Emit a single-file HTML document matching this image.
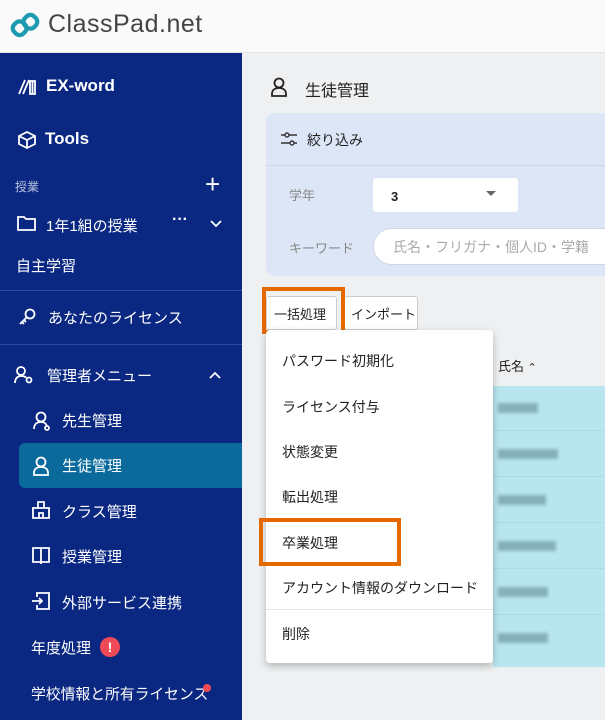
<!DOCTYPE html>
<html><head><meta charset="utf-8"><style>
*{box-sizing:border-box;margin:0;padding:0}
body{width:605px;height:720px;overflow:hidden;background:#eef0f2;font-family:"Liberation Sans","Noto Sans CJK JP",sans-serif;position:relative;color:#222}
.hdr{position:absolute;left:0;top:0;width:605px;height:53px;background:#fafafa;border-bottom:1px solid #e2e4e6}
.logo{position:absolute;left:48px;top:10px;font-size:25px;color:#444;letter-spacing:.5px}
.side{position:absolute;left:0;top:53px;width:242px;height:667px;background:#0a2781;color:#fff}
.s{position:absolute;font-size:15px;white-space:nowrap}
.hr{position:absolute;left:0;width:242px;height:1px;background:#2e4a9a}
.act{position:absolute;left:19px;top:390px;width:223px;height:45px;background:#0b6a9c;border-radius:6px 0 0 6px}
.m{position:absolute;white-space:nowrap}
.panel{position:absolute;left:266px;top:113px;width:345px;height:163px;background:#dde6f7;border-radius:8px}
.dd{position:absolute;left:266px;top:330px;width:227px;height:333px;background:#fff;border-radius:4px;box-shadow:0 3px 8px rgba(0,0,0,.25)}
.di{position:absolute;left:16px;font-size:14px;color:#222}
.row{position:absolute;left:493px;width:112px;height:45px;border-bottom:1px solid #a9dbe3}
.blur{position:absolute;left:5px;top:17px;height:10px;background:#6f9aa5;opacity:.7;filter:blur(1.5px)}
</style></head><body>
<div class="hdr">
<svg style="position:absolute;left:10px;top:10px" width="30" height="30" viewBox="0 0 28 28"><g fill="none" stroke="#1f9bb0" stroke-width="4"><rect x="3" y="11" width="12" height="12" rx="5" transform="rotate(-45 9 17)"/><rect x="13" y="5" width="12" height="12" rx="5" transform="rotate(-45 19 11)"/></g></svg>
<div class="logo">ClassPad.net</div></div>
<div class="side">
<svg style="position:absolute;left:18px;top:26px" width="18" height="16" viewBox="0 0 18 16" fill="none" stroke="#fff" stroke-width="1.8"><path d="M1 15L7 1M5 15L11 1M12 2h5v13h-5zM14.5 2v13"/></svg>
<div class="s" style="left:46px;top:23px;font-weight:bold;font-size:17px">EX-word</div>
<svg style="position:absolute;left:18px;top:78px" width="18" height="18" viewBox="0 0 18 18" fill="none" stroke="#fff" stroke-width="1.8"><path d="M9 1L17 5v8L9 17 1 13V5zM1 5l8 4 8-4M9 9v8"/></svg>
<div class="s" style="left:45px;top:76px;font-weight:bold;font-size:17px">Tools</div>
<div class="s" style="left:15px;top:125px;font-size:12px;color:#b9c3e0">授業</div>
<div class="s" style="left:205px;top:116px;font-size:26px;font-weight:300">+</div>
<svg style="position:absolute;left:17px;top:163px" width="19" height="15" viewBox="0 0 19 15" fill="none" stroke="#fff" stroke-width="1.8"><path d="M1 1h6l2 2h9v11H1z"/></svg>
<div class="s" style="left:46px;top:162px">1年1組の授業</div>
<div class="s" style="left:172px;top:158px;font-size:16px;font-weight:bold">···</div>
<svg style="position:absolute;left:210px;top:167px" width="12" height="8" viewBox="0 0 12 8" fill="none" stroke="#fff" stroke-width="1.8"><path d="M1 1l5 5 5-5"/></svg>
<div class="s" style="left:16px;top:202px">自主学習</div>
<div class="hr" style="top:237px"></div>
<svg style="position:absolute;left:18px;top:255px" width="18" height="18" viewBox="0 0 18 18" fill="none" stroke="#fff" stroke-width="1.8"><circle cx="12" cy="6" r="4.5"/><path d="M9 9L2 16M4 14l2 2M6 12l2 2"/></svg>
<div class="s" style="left:48px;top:254px">あなたのライセンス</div>
<div class="hr" style="top:291px"></div>
<svg style="position:absolute;left:14px;top:313px" width="20" height="18" viewBox="0 0 20 18" fill="none" stroke="#fff" stroke-width="1.8"><circle cx="7" cy="5" r="4"/><path d="M1 17c0-5 3-7 6-7s5 1 5 2"/><circle cx="15" cy="14" r="2.5"/></svg>
<div class="s" style="left:47px;top:312px">管理者メニュー</div>
<svg style="position:absolute;left:209px;top:318px" width="12" height="8" viewBox="0 0 12 8" fill="none" stroke="#fff" stroke-width="1.8"><path d="M1 7l5-5 5 5"/></svg>
<svg style="position:absolute;left:32px;top:358px" width="20" height="20" viewBox="0 0 20 20" fill="none" stroke="#fff" stroke-width="1.8"><circle cx="9" cy="6" r="4.5"/><path d="M2 18c0-5 3-7 7-7s5 2 6 4"/><circle cx="15" cy="17" r="2"/></svg>
<div class="s" style="left:62px;top:357px">先生管理</div>
<div class="act"></div>
<svg style="position:absolute;left:32px;top:403px" width="18" height="20" viewBox="0 0 18 20" fill="none" stroke="#fff" stroke-width="1.8"><circle cx="9" cy="6" r="4.5"/><path d="M2 19v-2c0-4 3-6 7-6s7 2 7 6v2z"/></svg>
<div class="s" style="left:62px;top:402px">生徒管理</div>
<svg style="position:absolute;left:32px;top:448px" width="18" height="18" viewBox="0 0 18 18" fill="none" stroke="#fff" stroke-width="1.8"><path d="M6 1h6v6H6zM1 7h16v10H1zM7 17v-5h4v5"/></svg>
<div class="s" style="left:62px;top:448px">クラス管理</div>
<svg style="position:absolute;left:32px;top:494px" width="18" height="18" viewBox="0 0 18 18" fill="none" stroke="#fff" stroke-width="1.8"><path d="M1 1h16v14H1zM9 1v16"/></svg>
<div class="s" style="left:62px;top:493px">授業管理</div>
<svg style="position:absolute;left:31px;top:539px" width="19" height="18" viewBox="0 0 19 18" fill="none" stroke="#fff" stroke-width="1.8"><path d="M6 5V1h12v16H6v-4M1 9h10M8 6l3 3-3 3"/></svg>
<div class="s" style="left:62px;top:539px">外部サービス連携</div>
<div class="s" style="left:31px;top:584px">年度処理</div>
<div style="position:absolute;left:100px;top:584px;width:20px;height:20px;border-radius:50%;background:#ef4a56;color:#fff;font-size:14px;font-weight:bold;text-align:center;line-height:20px">!</div>
<div class="s" style="left:31px;top:630px;font-size:14.8px">学校情報と所有ライセンス</div>
<div style="position:absolute;left:203px;top:631px;width:8px;height:8px;border-radius:50%;background:#ef4a56"></div>
</div>
<svg style="position:absolute;left:270px;top:77px" width="18" height="20" viewBox="0 0 18 20" fill="none" stroke="#222" stroke-width="1.8"><circle cx="9" cy="6" r="4.5"/><path d="M2 19v-2c0-4 3-6 7-6s7 2 7 6v2z"/></svg>
<div class="m" style="left:305px;top:77px;font-size:16px">生徒管理</div>
<div class="panel">
<svg style="position:absolute;left:14px;top:19px" width="18" height="14" viewBox="0 0 18 14" fill="none" stroke="#333" stroke-width="1.4"><path d="M1 3h4M9 3h8M1 11h9M14 11h3"/><circle cx="7" cy="3" r="2"/><circle cx="12" cy="11" r="2"/></svg>
<div class="m" style="left:41px;top:17px;font-size:14px">絞り込み</div>
<div style="position:absolute;left:0;top:52px;width:345px;height:1px;background:#cbd6ec"></div>
<div class="m" style="left:23px;top:72px;font-size:13px;color:#888">学年</div>
<div style="position:absolute;left:107px;top:65px;width:145px;height:34px;background:#fff;border-radius:3px"></div>
<div class="m" style="left:125px;top:76px;font-size:13px;font-weight:bold">3</div>
<div style="position:absolute;left:220px;top:78px;border-left:5px solid transparent;border-right:5px solid transparent;border-top:5px solid #666"></div>
<div class="m" style="left:23px;top:125px;font-size:13px;color:#888">キーワード</div>
<div style="position:absolute;left:107px;top:115px;width:260px;height:37px;background:#fff;border-radius:19px;border:1px solid #d0d6e2"></div>
<div class="m" style="left:127px;top:124px;font-size:14px;color:#aaa">氏名・フリガナ・個人ID・学籍</div>
</div>
<div style="position:absolute;left:266px;top:296px;width:71px;height:34px;background:#fff;border:1px solid #ccc;border-radius:3px"></div>
<div class="m" style="left:274px;top:304px;font-size:13px">一括処理</div>
<div style="position:absolute;left:344px;top:296px;width:74px;height:34px;background:#fff;border:1px solid #ccc;border-radius:3px"></div>
<div class="m" style="left:351px;top:304px;font-size:13px">インポート</div>
<div style="position:absolute;left:262px;top:287px;width:83px;height:47px;border:4px solid #e46a00"></div>
<div class="m" style="left:498px;top:356px;font-size:13px">氏名 <span style="font-size:11px">⌃</span></div>
<div style="position:absolute;left:493px;top:386px;width:112px;height:281px;background:#b9e6ee"></div>
<div class="row" style="top:386px"><div class="blur" style="width:40px"></div></div>
<div class="row" style="top:432px"><div class="blur" style="width:60px"></div></div>
<div class="row" style="top:478px"><div class="blur" style="width:48px"></div></div>
<div class="row" style="top:524px"><div class="blur" style="width:58px"></div></div>
<div class="row" style="top:570px"><div class="blur" style="width:50px"></div></div>
<div class="row" style="top:616px;border:none"><div class="blur" style="width:50px"></div></div>
<div class="dd">
<div class="di" style="top:21px">パスワード初期化</div>
<div class="di" style="top:67px">ライセンス付与</div>
<div class="di" style="top:112px">状態変更</div>
<div class="di" style="top:157px">転出処理</div>
<div class="di" style="top:203px">卒業処理</div>
<div class="di" style="top:248px">アカウント情報のダウンロード</div>
<div style="position:absolute;left:0;top:279px;width:227px;height:1px;background:#e6e6e6"></div>
<div class="di" style="top:294px">削除</div>
</div>
<div style="position:absolute;left:259px;top:518px;width:142px;height:48px;border:4px solid #e46a00"></div>
</body></html>
